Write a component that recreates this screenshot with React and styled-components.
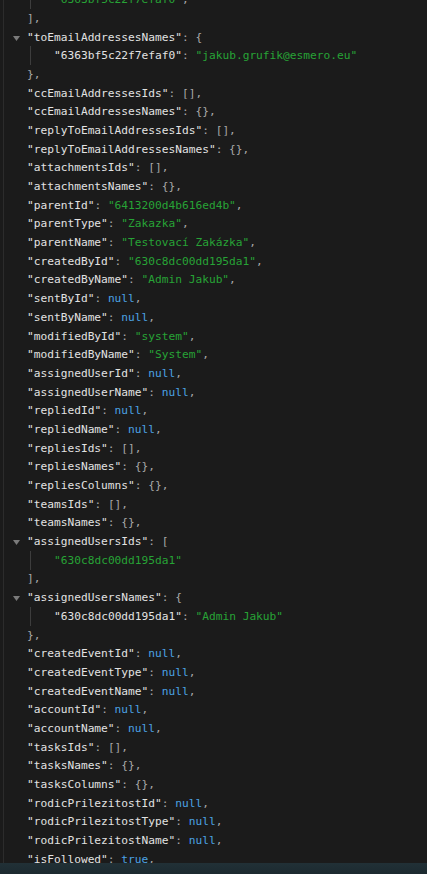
import styled, { createGlobalStyle } from "styled-components";

const GlobalStyle = createGlobalStyle`
    html, body {
        margin: 0;
        padding: 0;
        background: #1b1b1b;
    }
`;

const Page = styled.div`
    width: 427px;
    height: 874px;
    display: flex;
    flex-direction: column;
    overflow: hidden;
    background: #1b1b1b;
    font-family: "DejaVu Sans Mono", "Liberation Mono", monospace;
    font-size: 11.2px;
`;

const Editor = styled.div`
    flex: 1;
    overflow: hidden;
    background: linear-gradient(#2c2c2c, #2c2c2c) 3px 0 / 1px 100% no-repeat;
`;

const Lines = styled.ul`
    list-style: none;
    margin: -9.7px 0 0;
    padding: 0;
`;

const Line = styled.li`
    display: flex;
    align-items: center;
    height: 18.7px;
    white-space: pre;
`;

const Gutter = styled.span`
    width: 27px;
    height: 100%;
    flex-shrink: 0;
    display: flex;
    align-items: center;
    justify-content: flex-end;
    padding-right: 7px;
    box-sizing: border-box;
    padding-top: 2px;
`;

const Guide = styled.span`
    width: 27px;
    height: 100%;
    flex-shrink: 0;
    background: linear-gradient(#3d3d3d, #3d3d3d) 3px 0 / 1px 100% no-repeat;
`;

const Key = styled.span`
    color: #e2e2e2;
`;

const Punct = styled.span`
    color: #a8a8a8;
`;

const Str = styled.span`
    color: #27a336;
`;

const Lit = styled.span`
    color: #4ba2e4;
`;

const StatusBar = styled.div`
    height: 11px;
    flex-shrink: 0;
    background: linear-gradient(180deg, #213036, #1c2a30);
`;

function FoldArrow() {
    return (
        <svg width="7" height="5" viewBox="0 0 7 5">
            <polygon points="0,0 7,0 3.5,5" fill="#7b7b7b" />
        </svg>
    );
}

// [indent, key, value, kind, fold]
const rows = [
    [2, null, '"6363bf5c22f7efaf0"', "str"],
    [1, null, "],", "punct"],
    [1, "toEmailAddressesNames", "{", "open", true],
    [2, "6363bf5c22f7efaf0", '"jakub.grufik@esmero.eu"', "strEnd"],
    [1, null, "},", "punct"],
    [1, "ccEmailAddressesIds", "[],", "punct"],
    [1, "ccEmailAddressesNames", "{},", "punct"],
    [1, "replyToEmailAddressesIds", "[],", "punct"],
    [1, "replyToEmailAddressesNames", "{},", "punct"],
    [1, "attachmentsIds", "[],", "punct"],
    [1, "attachmentsNames", "{},", "punct"],
    [1, "parentId", '"6413200d4b616ed4b"', "str"],
    [1, "parentType", '"Zakazka"', "str"],
    [1, "parentName", '"Testovací Zakázka"', "str"],
    [1, "createdById", '"630c8dc00dd195da1"', "str"],
    [1, "createdByName", '"Admin Jakub"', "str"],
    [1, "sentById", "null", "lit"],
    [1, "sentByName", "null", "lit"],
    [1, "modifiedById", '"system"', "str"],
    [1, "modifiedByName", '"System"', "str"],
    [1, "assignedUserId", "null", "lit"],
    [1, "assignedUserName", "null", "lit"],
    [1, "repliedId", "null", "lit"],
    [1, "repliedName", "null", "lit"],
    [1, "repliesIds", "[],", "punct"],
    [1, "repliesNames", "{},", "punct"],
    [1, "repliesColumns", "{},", "punct"],
    [1, "teamsIds", "[],", "punct"],
    [1, "teamsNames", "{},", "punct"],
    [1, "assignedUsersIds", "[", "open", true],
    [2, null, '"630c8dc00dd195da1"', "strEnd"],
    [1, null, "],", "punct"],
    [1, "assignedUsersNames", "{", "open", true],
    [2, "630c8dc00dd195da1", '"Admin Jakub"', "strEnd"],
    [1, null, "},", "punct"],
    [1, "createdEventId", "null", "lit"],
    [1, "createdEventType", "null", "lit"],
    [1, "createdEventName", "null", "lit"],
    [1, "accountId", "null", "lit"],
    [1, "accountName", "null", "lit"],
    [1, "tasksIds", "[],", "punct"],
    [1, "tasksNames", "{},", "punct"],
    [1, "tasksColumns", "{},", "punct"],
    [1, "rodicPrilezitostId", "null", "lit"],
    [1, "rodicPrilezitostType", "null", "lit"],
    [1, "rodicPrilezitostName", "null", "lit"],
    [1, "isFollowed", "true", "lit"],
];

function Value({ value, kind }) {
    if (kind === "str") return <><Str>{value}</Str><Punct>,</Punct></>;
    if (kind === "strEnd") return <Str>{value}</Str>;
    if (kind === "lit") return <><Lit>{value}</Lit><Punct>,</Punct></>;
    return <Punct>{value}</Punct>;
}

function CodeLine({ indent, name, value, kind, fold }) {
    return (
        <Line>
            <Gutter>{fold && <FoldArrow />}</Gutter>
            {indent > 1 && <Guide />}
            {name && (
                <>
                    <Key>"{name}"</Key>
                    <Punct>: </Punct>
                </>
            )}
            <Value value={value} kind={kind} />
        </Line>
    );
}

export default function App() {
    return (
        <Page>
            <GlobalStyle />
            <Editor>
                <Lines>
                    {rows.map(([indent, name, value, kind, fold], i) => (
                        <CodeLine key={i} indent={indent} name={name} value={value} kind={kind} fold={fold} />
                    ))}
                </Lines>
            </Editor>
            <StatusBar />
        </Page>
    );
}
